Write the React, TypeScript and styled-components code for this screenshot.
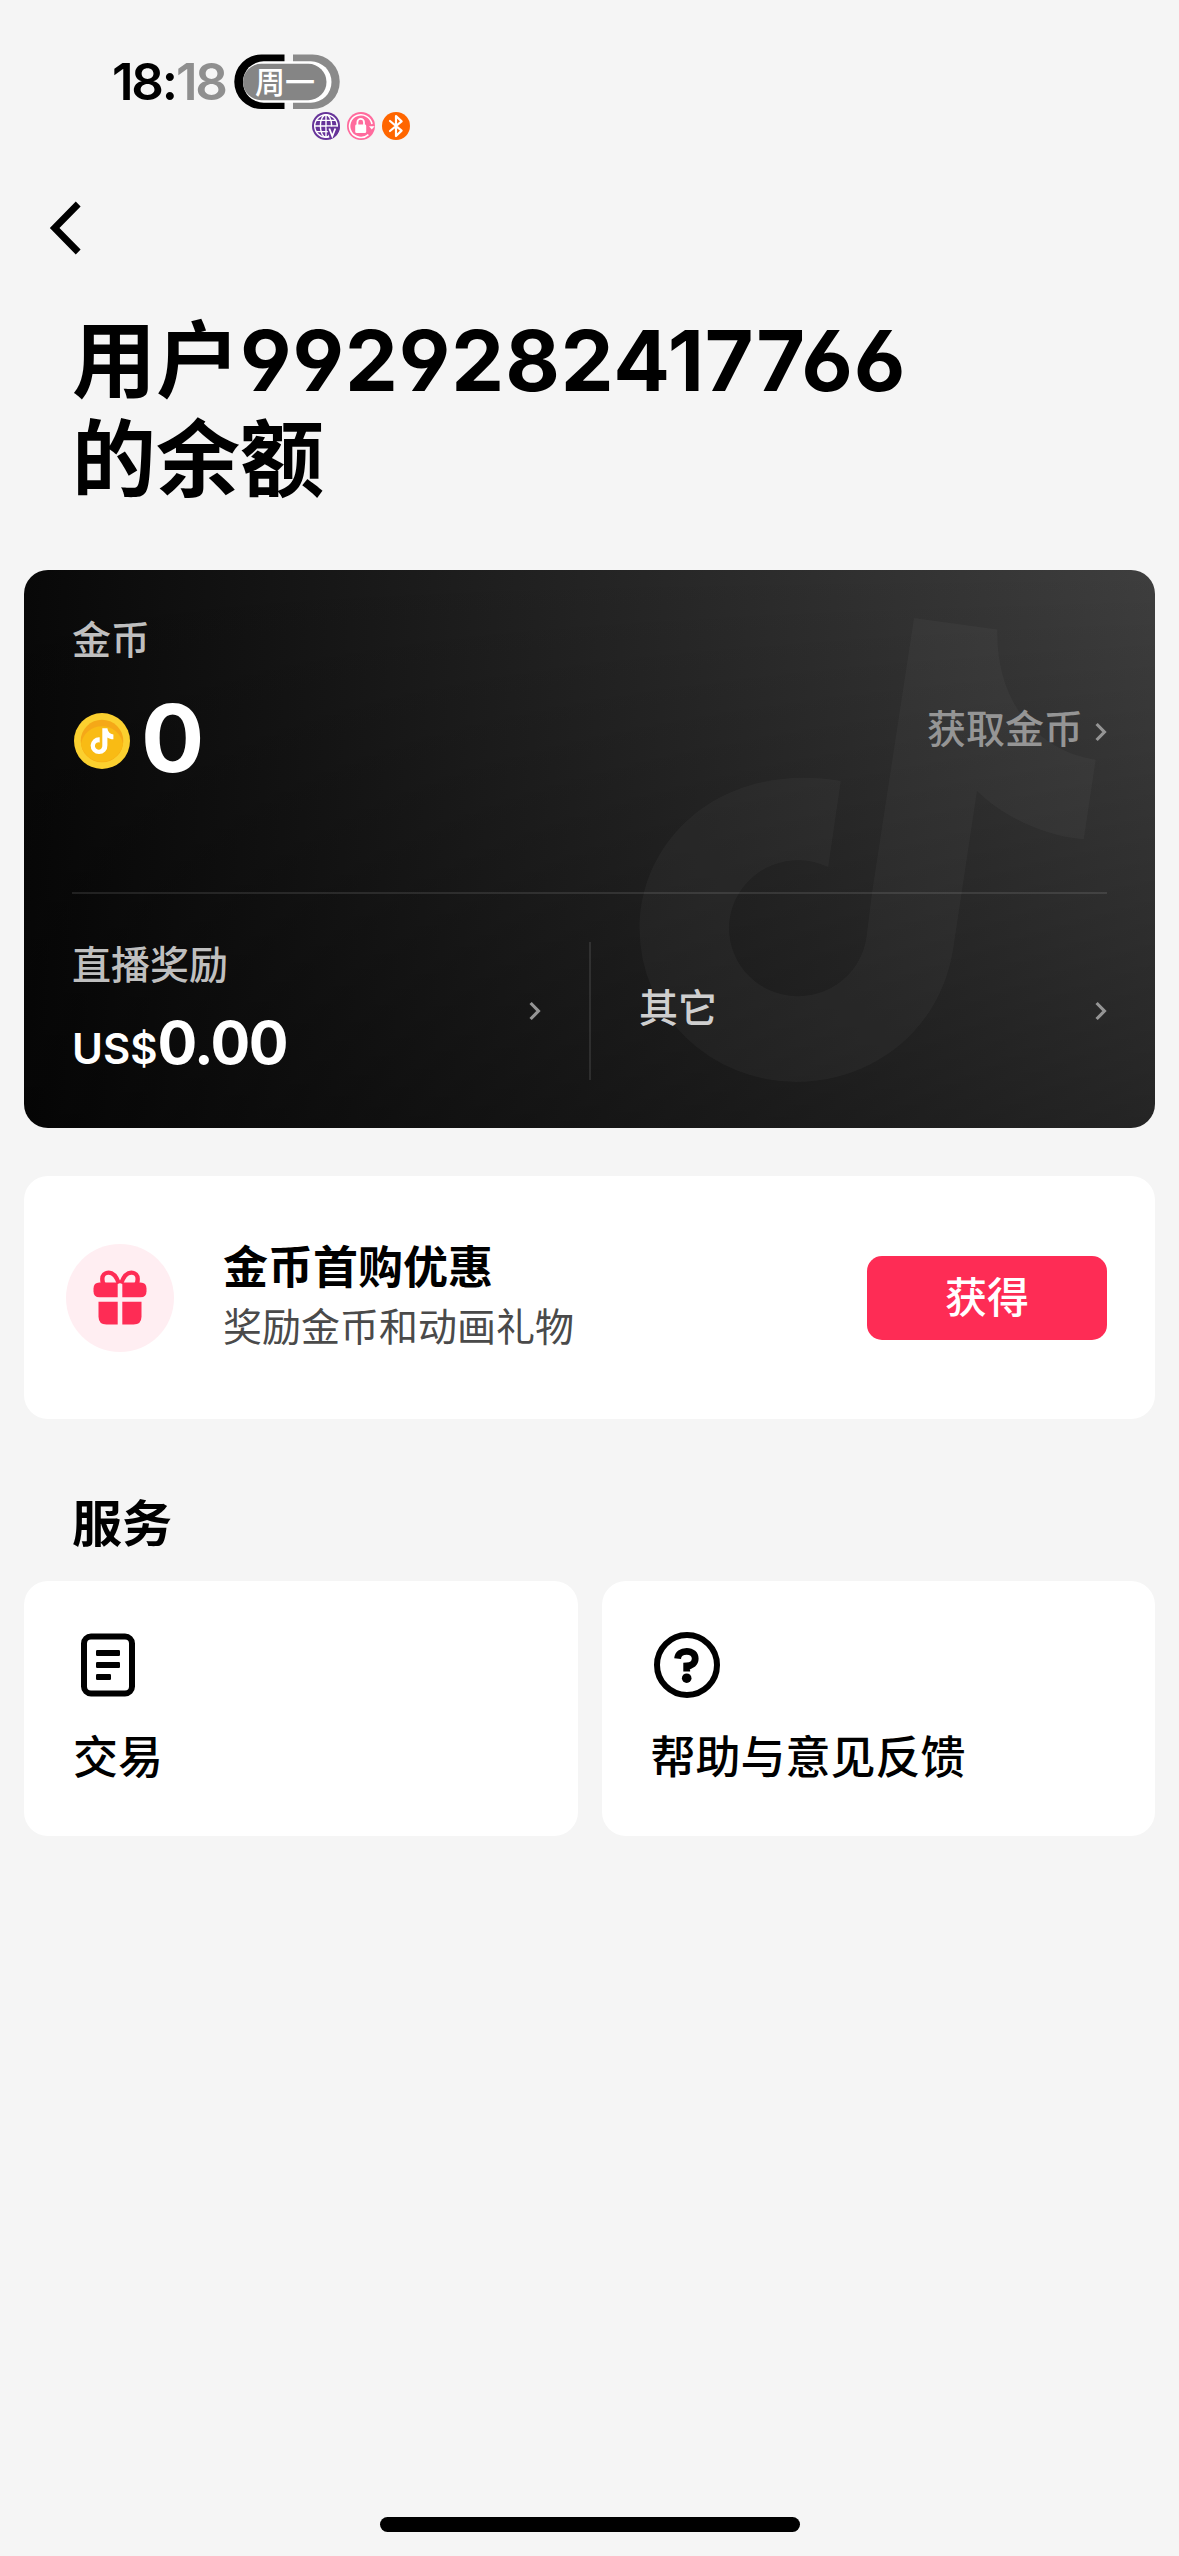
import React from "react";
import styled, { createGlobalStyle } from "styled-components";

const GlobalStyle = createGlobalStyle`
  * { box-sizing: border-box; }
  html, body { margin: 0; padding: 0; background: #f5f5f5; }
  body {
    font-family: Inter, "Noto Sans CJK SC", sans-serif;
    color: #000;
  }
  svg { display: block; flex: none; }
`;

const Page = styled.main`
  width: 1179px;
  height: 2556px;
  background: #f5f5f5;
  display: flex;
  flex-direction: column;
  overflow: hidden;
`;

const StatusBar = styled.header`
  height: 150px;
  padding: 54px 0 0 112px;
  display: flex;
  flex-direction: column;
  flex: none;
`;

const StatusRow = styled.div`
  height: 56px;
  display: flex;
  align-items: center;
`;

const Clock = styled.div`
  width: 122px;
  font-size: 51px;
  line-height: 58px;
  font-weight: 600;
  letter-spacing: -2.2px;
  white-space: nowrap;
`;

const Minutes = styled.span`
  color: #8f8f8f;
`;

const DayBadge = styled.div`
  position: relative;
  width: 106px;
  height: 56px;
`;

const DayText = styled.span`
  position: absolute;
  left: 21px;
  top: 8px;
  font-size: 30px;
  line-height: 40px;
  font-weight: 500;
  color: #fff;
  white-space: nowrap;
`;

const StatusIcons = styled.div`
  display: flex;
  gap: 7px;
  padding: 2px 0 0 200px;
`;

const NavBar = styled.nav`
  height: 161px;
  padding: 50px 0 0 48px;
  flex: none;
`;

const BackButton = styled.button`
  display: block;
  border: 0;
  padding: 0;
  background: none;
`;

const Title = styled.h1`
  margin: 0 0 61px;
  padding: 0 72px;
  font-size: 84px;
  line-height: 99px;
  font-weight: 700;
  font-feature-settings: "cv03", "cv04";
  flex: none;
`;

const UserNumber = styled.span`
  letter-spacing: 0.9px;
`;

const BalanceCard = styled.section`
  position: relative;
  margin: 0 24px 48px;
  height: 558px;
  padding: 0 48px;
  border-radius: 24px;
  overflow: hidden;
  color: #fff;
  background: linear-gradient(180deg, rgba(0, 0, 0, 0), rgba(0, 0, 0, 0.42)),
    linear-gradient(92deg, #080808 0%, #1f1f1f 41%, #3f3f3f 100%);
  flex: none;
`;

const Watermark = styled.svg`
  position: absolute;
  left: 600px;
  top: 30px;
`;

const CoinSection = styled.div`
  position: relative;
  height: 324px;
  display: flex;
  justify-content: space-between;
  align-items: flex-start;
  border-bottom: 2px solid rgba(255, 255, 255, 0.1);
`;

const CoinColumn = styled.div`
  padding-top: 46px;
`;

const Label = styled.div<{ $color?: string }>`
  font-size: 39px;
  line-height: 48px;
  font-weight: 500;
  color: ${(p) => p.$color ?? "#bfbfbf"};
  white-space: nowrap;
`;

const CoinAmount = styled.div`
  margin-top: 34px;
  height: 80px;
  display: flex;
  align-items: center;
  gap: 11px;
  padding-left: 2px;
  font-size: 94px;
  line-height: 80px;
  font-weight: 700;

  svg { margin-top: 6px; }
`;

const GetCoins = styled.a`
  margin-top: 135px;
  display: flex;
  align-items: center;
  gap: 12px;

  svg { margin-top: 6px; }
`;

const RewardSection = styled.div`
  position: relative;
  height: 234px;
  display: flex;
  align-items: flex-start;
`;

const RewardCell = styled.div<{ $width?: number; $pad: string }>`
  width: ${(p) => (p.$width ? `${p.$width}px` : "auto")};
  flex: ${(p) => (p.$width ? "none" : "1")};
  height: 234px;
  padding: ${(p) => p.$pad};
  display: flex;
  align-items: center;
  justify-content: space-between;
`;

const OtherRewards = styled.div`
  padding-bottom: 6px;
`;

const CellDivider = styled.div`
  width: 2px;
  height: 138px;
  margin-top: 48px;
  background: rgba(255, 255, 255, 0.1);
`;

const Money = styled.div`
  display: flex;
  align-items: baseline;
  margin-top: 24px;
  padding-bottom: 3px;
  font-weight: 700;
  line-height: 60px;
`;

const Currency = styled.span`
  font-size: 42px;
  font-weight: 600;
`;

const MoneyValue = styled.span`
  font-size: 59px;
  letter-spacing: -1.5px;
`;

const PromoCard = styled.section`
  margin: 0 24px;
  height: 243px;
  padding: 0 48px 0 42px;
  display: flex;
  align-items: center;
  border-radius: 24px;
  background: #fff;
  flex: none;
`;

const GiftCircle = styled.div`
  width: 108px;
  height: 108px;
  border-radius: 50%;
  background: #ffeef2;
  display: flex;
  align-items: center;
  justify-content: center;
`;

const PromoText = styled.div`
  flex: 1;
  padding: 0 0 2px 49px;
`;

const PromoTitle = styled.div`
  font-size: 45px;
  line-height: 60px;
  font-weight: 700;
`;

const PromoSubtitle = styled.div`
  font-size: 39px;
  line-height: 58px;
  color: #4a4a4a;
`;

const ClaimButton = styled.button`
  width: 240px;
  height: 84px;
  border: 0;
  padding: 0;
  border-radius: 15px;
  background: #fe2c55;
  color: #fff;
  font: 500 42px/84px Inter, "Noto Sans CJK SC", sans-serif;
`;

const SectionTitle = styled.h2`
  margin: 72px 0 24px;
  padding-left: 72px;
  height: 66px;
  font-size: 50px;
  line-height: 66px;
  font-weight: 700;
  flex: none;
`;

const ServiceGrid = styled.div`
  margin: 0 24px;
  display: grid;
  grid-template-columns: 1fr 1fr;
  gap: 24px;
  flex: none;
`;

const ServiceCard = styled.a`
  height: 255px;
  padding: 48px 0 0 48px;
  border-radius: 24px;
  background: #fff;
`;

const ServiceLabel = styled.div`
  margin-top: 27px;
  padding-left: 1px;
  font-size: 45px;
  line-height: 60px;
  font-weight: 500;
`;

const HomeIndicator = styled.div`
  width: 420px;
  height: 15px;
  margin: auto auto 24px 380px;
  border-radius: 8px;
  background: #000;
  flex: none;
`;

const ArrowIcon = () => (
  <svg width="12" height="20" viewBox="0 0 12 20" fill="none">
    <path d="M1.6 2 L9.4 10 L1.6 18" stroke="#959595" strokeWidth="3.2" />
  </svg>
);

const DayCapsule = () => (
  <svg width="106" height="56" viewBox="0 0 106 56">
    <path d="M50.5 .5H27.5a27.25 27.25 0 0 0 0 54.5H50.5Z" fill="#000" />
    <path d="M59 .5H78.5a27.25 27.25 0 0 1 0 54.5H59Z" fill="#8a8a8a" />
    <rect x="9" y="7.3" width="88.5" height="41.4" rx="20.7" fill="#fff" />
    <rect x="9" y="9.8" width="83.5" height="36.4" rx="18.2" fill="#858585" />
  </svg>
);

const GlobeIcon = () => (
  <svg width="28" height="28" viewBox="0 0 28 28" fill="none">
    <circle cx="14" cy="14" r="14" fill="#663399" />
    <g stroke="#fff" strokeWidth="1.4">
      <circle cx="14" cy="14" r="11.3" />
      <ellipse cx="14" cy="14" rx="5.6" ry="11.3" />
      <path d="M14 2.7V25.3M2.7 14H25.3M4.3 8.4H23.7M4.3 19.6H18" />
    </g>
    <path d="M14.5 14.8H28A14 14 0 0 1 18 27.4Z" fill="#663399" />
    <path d="M17.3 16.5L20.3 24.3L23.3 16.5" stroke="#fff" strokeWidth="1.8" />
  </svg>
);

const RotationLockIcon = () => (
  <svg width="28" height="28" viewBox="0 0 28 28" fill="none">
    <circle cx="14" cy="14" r="14" fill="#ff6b9d" />
    <path d="M21.4 22.6A11.3 11.3 0 1 1 25 12.2" stroke="#fff" strokeWidth="1.6" />
    <path d="M22 14.2H27.6L24.8 17.4Z" fill="#fff" />
    <rect x="8.2" y="12.5" width="11" height="8.6" rx="1.4" fill="#fff" />
    <path d="M10.4 13V10.2a3.3 3.3 0 0 1 6.6 0V13" stroke="#fff" strokeWidth="1.8" />
  </svg>
);

const BluetoothIcon = () => (
  <svg width="28" height="28" viewBox="0 0 28 28" fill="none">
    <circle cx="14" cy="14" r="14" fill="#ff6600" />
    <path
      d="M8 9L19.6 18.6L14 24V4L19.6 9.4L8 19"
      stroke="#fff"
      strokeWidth="2.2"
      strokeLinejoin="round"
      strokeLinecap="round"
    />
  </svg>
);

const notePath =
  "M914 618L997.3 629.5C996 700 1035 750 1095.7 759.7L1083.8 839.3C1045 836 1005 818 977 791L953 950C940 1030 873 1082 796 1082A156.5 153.5 0 0 1 639.5 929C639.5 835 726 761 840.8 781L828.2 867A69 68 0 1 0 866.5 937L872 893Z";

const CoinIcon = () => (
  <svg width="56" height="56" viewBox="0 0 56 56">
    <circle cx="28" cy="28" r="28" fill="#fbd02f" />
    <circle cx="28" cy="28" r="21.3" fill="#f5a818" />
    <path d="M7 31a21.3 21.3 0 0 1 42 0A21.3 21.3 0 0 1 7 31Z" fill="#f9bb14" />
    <path
      d="M28.3 15.2H33.4C33.7 18.6 35.8 21 39.4 21.4V26.3C37 26.3 35 25.5 33.4 24.4V32.2A8.4 8.4 0 1 1 25.7 24.3V29.4A3.7 3.7 0 1 0 28.3 32.5Z"
      fill="#fff"
    />
  </svg>
);

const GiftIcon = () => (
  <svg width="54" height="55" viewBox="0 0 54 55">
    <path
      d="M26 13.5C23.5 6.5 20 2.6 15.6 2.6C11.6 2.6 9.3 5.5 9.3 9C9.3 12 10.4 14.5 12 15.5M28 13.5C30.5 6.5 34 2.6 38.4 2.6C42.4 2.6 44.7 5.5 44.7 9C44.7 12 43.6 14.5 42 15.5"
      fill="none"
      stroke="#fe2c55"
      strokeWidth="4.4"
    />
    <path d="M24.7 12.4V27.3H6.5Q.5 27.3 .5 21.3V18.4Q.5 12.4 6.5 12.4Z" fill="#fe2c55" />
    <path d="M29.3 12.4V27.3H47.5Q53.5 27.3 53.5 21.3V18.4Q53.5 12.4 47.5 12.4Z" fill="#fe2c55" />
    <path d="M5.5 31.7H24.7V54.5H13.5Q5.5 54.5 5.5 46.5Z" fill="#fe2c55" />
    <path d="M48.5 31.7H29.3V54.5H40.5Q48.5 54.5 48.5 46.5Z" fill="#fe2c55" />
  </svg>
);

const ReceiptIcon = () => (
  <svg width="72" height="72" viewBox="0 0 72 72" fill="none">
    <rect x="12" y="7.5" width="48" height="57" rx="7" stroke="#000" strokeWidth="6" />
    <g fill="#000">
      <rect x="24" y="21" width="24" height="6" rx="1.2" />
      <rect x="24" y="33" width="24" height="6" rx="1.2" />
      <rect x="24" y="45" width="15" height="6" rx="1.2" />
    </g>
  </svg>
);

const HelpIcon = () => (
  <svg width="72" height="72" viewBox="0 0 72 72" fill="none">
    <circle cx="37" cy="36" r="30" stroke="#000" strokeWidth="6" />
    <path
      d="M27.6 29.6C28 25 31.6 22.3 36.7 22.3C42 22.3 45.2 25.4 45.2 29.6C45.2 34 42 36.8 36.7 37V42.4"
      stroke="#000"
      strokeWidth="6.8"
    />
    <circle cx="36.7" cy="49.2" r="4.8" fill="#000" />
  </svg>
);

export default function App() {
  return (
    <>
      <GlobalStyle />
      <Page>
        <StatusBar>
          <StatusRow>
            <Clock>
              18:<Minutes>18</Minutes>
            </Clock>
            <DayBadge>
              <DayCapsule />
              <DayText>周一</DayText>
            </DayBadge>
          </StatusRow>
          <StatusIcons>
            <GlobeIcon />
            <RotationLockIcon />
            <BluetoothIcon />
          </StatusIcons>
        </StatusBar>

        <NavBar>
          <BackButton aria-label="返回">
            <svg width="36" height="56" viewBox="0 0 36 56" fill="none">
              <path d="M30.2 4L6.6 28L30.2 52" stroke="#000" strokeWidth="6.8" />
            </svg>
          </BackButton>
        </NavBar>

        <Title>
          用户<UserNumber>9929282417766</UserNumber>
          <br />
          的余额
        </Title>

        <BalanceCard>
          <Watermark width="500" height="500" viewBox="624 600 500 500">
            <path d={notePath} fill="#fff" fillOpacity="0.03" />
          </Watermark>
          <CoinSection>
            <CoinColumn>
              <Label>金币</Label>
              <CoinAmount>
                <CoinIcon />
                <span>0</span>
              </CoinAmount>
            </CoinColumn>
            <GetCoins>
              <Label $color="#959595">获取金币</Label>
              <ArrowIcon />
            </GetCoins>
          </CoinSection>
          <RewardSection>
            <RewardCell $width={517} $pad="0 48px 0 0">
              <div>
                <Label>直播奖励</Label>
                <Money>
                  <Currency>US$</Currency>
                  <MoneyValue>0.00</MoneyValue>
                </Money>
              </div>
              <ArrowIcon />
            </RewardCell>
            <CellDivider />
            <RewardCell $pad="0 0 0 48px">
              <OtherRewards>
                <Label $color="#cfcfcf">其它</Label>
              </OtherRewards>
              <ArrowIcon />
            </RewardCell>
          </RewardSection>
        </BalanceCard>

        <PromoCard>
          <GiftCircle>
            <GiftIcon />
          </GiftCircle>
          <PromoText>
            <PromoTitle>金币首购优惠</PromoTitle>
            <PromoSubtitle>奖励金币和动画礼物</PromoSubtitle>
          </PromoText>
          <ClaimButton>获得</ClaimButton>
        </PromoCard>

        <SectionTitle>服务</SectionTitle>
        <ServiceGrid>
          <ServiceCard>
            <ReceiptIcon />
            <ServiceLabel>交易</ServiceLabel>
          </ServiceCard>
          <ServiceCard>
            <HelpIcon />
            <ServiceLabel>帮助与意见反馈</ServiceLabel>
          </ServiceCard>
        </ServiceGrid>

        <HomeIndicator />
      </Page>
    </>
  );
}
